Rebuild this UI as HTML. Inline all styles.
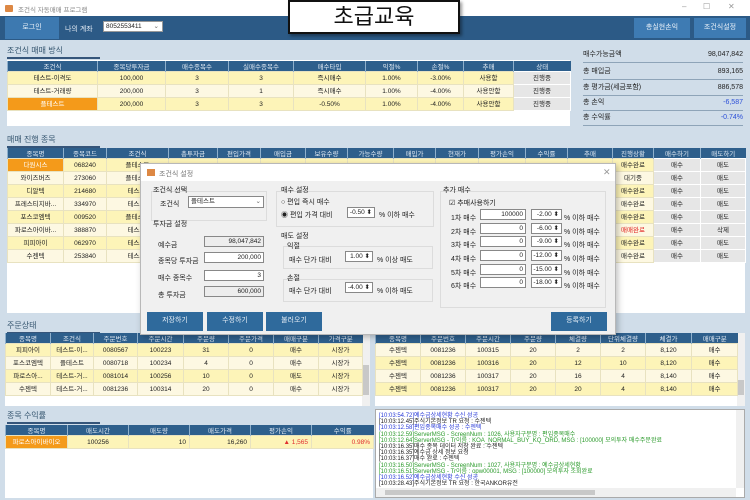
<!DOCTYPE html>
<html><head><meta charset="utf-8">
<style>
*{margin:0;padding:0;box-sizing:border-box}
body{width:750px;height:500px;overflow:hidden;background:#d0dde9;font-family:"Liberation Sans","Noto Sans CJK KR",sans-serif;font-size:7px;color:#222;position:relative}
.a{position:absolute}
table{border-collapse:collapse;table-layout:fixed;position:absolute;background:#fff}
th{background:#2e5f8c;color:#dfe8f2;font-weight:normal;height:9px;font-size:6.5px;border-left:1px solid #8fb0cc;text-align:center}
td{height:13px;line-height:11px;text-align:center;font-size:6.5px;border:1px solid #e8e2c0;white-space:nowrap;overflow:hidden}
tr.y td{background:#fdf4b8}
tr.w td{background:#fdf8e2}
td.o{background:#f49a1a!important;color:#fff}
td.r{text-align:right;padding-right:3px}
td.g{background:#e6e6e6!important;border:1px solid #fff}
.btn{position:absolute;background:#3e7bb3;color:#e8f0f8;text-align:center;font-size:7px}
.sec{position:absolute;font-size:8px;color:#35556f;border-bottom:2px solid #35557a;width:93px;padding-bottom:1px}
.rp{position:absolute;left:583px;width:160px;border-bottom:1px solid #8ea4b8;height:15px;font-size:7px;line-height:14px}
.rp span{float:right}
.dlg{position:absolute;left:140px;top:163px;width:476px;height:172px;background:#f0f0f0;border:1px solid #b8b8b8;box-shadow:2px 2px 6px rgba(0,0,0,.25)}
.dlg .a{font-size:7px;white-space:nowrap}
.in{position:absolute;background:#fff;border:1px solid #888;text-align:right;padding-right:2px;font-size:6.5px;line-height:9px;height:11px;white-space:nowrap;overflow:hidden}
.ro{background:#ededed}
.grp{position:absolute;border:1px solid #dcdcdc}
.dbtn{position:absolute;background:#2f6a9c;color:#e6eef6;font-size:7px;text-align:center;line-height:18px;height:19px}
.log div{height:6.2px;line-height:6.2px;font-size:6px;white-space:nowrap}
.b{color:#2a3bd8}.k{color:#222}.gr{color:#2a9a2a}
</style></head><body>
<div class="a" style="left:0;top:0;width:750px;height:16px;background:#fff"></div>
<div class="a" style="left:5px;top:5px;width:8px;height:7px;background:#d84;border-radius:1px"></div>
<div class="a" style="left:18px;top:4px;color:#888;font-size:6.5px">조건식 자동매매 프로그램</div>
<div class="a" style="left:682px;top:2px;color:#999;font-size:8px">–</div>
<div class="a" style="left:703px;top:2px;color:#999;font-size:8px">☐</div>
<div class="a" style="left:728px;top:2px;color:#999;font-size:8px">✕</div>
<div class="a" style="left:0;top:16px;width:750px;height:24px;background:#2c5a86"></div>
<div class="btn" style="left:5px;top:17px;width:54px;height:22px;line-height:22px;background:#3d79b0">로그인</div>
<div class="a" style="left:65px;top:24px;color:#dfe8f2;font-size:7px">나의 계좌</div>
<div class="a" style="left:103px;top:21px;width:60px;height:11px;background:#fff;border:1px solid #999;font-size:6.5px;line-height:9px;padding-left:2px">8052553411<span style="float:right;margin-right:3px;color:#666">⌄</span></div>
<div class="btn" style="left:634px;top:18px;width:56px;height:20px;line-height:20px">총실현손익</div>
<div class="btn" style="left:694px;top:18px;width:52px;height:20px;line-height:20px">조건식설정</div>
<div class="a" style="left:288px;top:0;width:172px;height:34px;background:#fff;border:2px solid #111;box-shadow:2px 2px 3px rgba(0,0,0,.4);font-size:22px;text-align:center;line-height:30px;color:#111">초급교육</div>

<div class="sec" style="left:7px;top:45px">조건식 매매 방식</div>
<div class="a" style="left:7px;top:60px;width:563px;height:66px;background:#fff"></div>
<table style="left:7px;top:61px;width:563px">
<colgroup><col style="width:90px"><col style="width:68px"><col style="width:63px"><col style="width:65px"><col style="width:72px"><col style="width:52px"><col style="width:46px"><col style="width:50px"><col style="width:57px"></colgroup>
<tr><th>조건식</th><th>종목당투자금</th><th>매수종목수</th><th>실매수종목수</th><th>매수타입</th><th>익절%</th><th>손절%</th><th>추매</th><th>상태</th></tr>
<tr class="y"><td>테스트-이격도</td><td>100,000</td><td>3</td><td>3</td><td>즉시매수</td><td>1.00%</td><td>-3.00%</td><td>사용함</td><td class="g">진행중</td></tr>
<tr class="w"><td>테스트-거래량</td><td>200,000</td><td>3</td><td>1</td><td>즉시매수</td><td>1.00%</td><td>-4.00%</td><td>사용안함</td><td class="g">진행중</td></tr>
<tr class="y"><td class="o">플테스트</td><td>200,000</td><td>3</td><td>3</td><td>-0.50%</td><td>1.00%</td><td>-4.00%</td><td>사용안함</td><td class="g">진행중</td></tr>
</table>
<div class="rp" style="top:48px">매수가능금액<span>98,047,842</span></div>
<div class="rp" style="top:65px">총 매입금<span>893,165</span></div>
<div class="rp" style="top:81px">총 평가금(세금포함)<span>886,578</span></div>
<div class="rp" style="top:96px">총 손익<span style="color:#2b4fd8">-6,587</span></div>
<div class="rp" style="top:111px">총 수익률<span style="color:#2b4fd8">-0.74%</span></div>

<div class="sec" style="left:7px;top:134px">매매 진행 종목</div>
<div class="a" style="left:7px;top:148px;width:738px;height:165px;background:#fff"></div>
<table style="left:7px;top:148px;width:738px">
<colgroup><col style="width:56px"><col style="width:43px"><col style="width:62px"><col style="width:49px"><col style="width:43px"><col style="width:45px"><col style="width:42px"><col style="width:46px"><col style="width:42px"><col style="width:43px"><col style="width:47px"><col style="width:42px"><col style="width:45px"><col style="width:41px"><col style="width:47px"><col style="width:45px"></colgroup>
<tr><th>종목명</th><th>종목코드</th><th>조건식</th><th>총투자금</th><th>편입가격</th><th>매입금</th><th>보유수량</th><th>가능수량</th><th>매입가</th><th>현재가</th><th>평가손익</th><th>수익률</th><th>추매</th><th>진행상황</th><th>매수하기</th><th>매도하기</th></tr>
<tr class="y"><td class="o">다원시스</td><td>068240</td><td>플테스트</td><td></td><td></td><td></td><td></td><td></td><td></td><td></td><td></td><td></td><td></td><td>매수완료</td><td class="g">매수</td><td class="g">매도</td></tr>
<tr class="w"><td>와이즈버즈</td><td>273060</td><td>플테스트</td><td></td><td></td><td></td><td></td><td></td><td></td><td></td><td></td><td></td><td></td><td>대기중</td><td class="g">매수</td><td class="g">매도</td></tr>
<tr class="y"><td>디알텍</td><td>214680</td><td>테스트-</td><td></td><td></td><td></td><td></td><td></td><td></td><td></td><td></td><td></td><td></td><td>매수완료</td><td class="g">매수</td><td class="g">매도</td></tr>
<tr class="w"><td>프레스티지바...</td><td>334970</td><td>테스트-</td><td></td><td></td><td></td><td></td><td></td><td></td><td></td><td></td><td></td><td></td><td>매수완료</td><td class="g">매수</td><td class="g">매도</td></tr>
<tr class="y"><td>포스코엠텍</td><td>009520</td><td>플테스트</td><td></td><td></td><td></td><td></td><td></td><td></td><td></td><td></td><td></td><td></td><td>매수완료</td><td class="g">매수</td><td class="g">매도</td></tr>
<tr class="w"><td>파로스아이바...</td><td>388870</td><td>테스트-</td><td></td><td></td><td></td><td></td><td></td><td></td><td></td><td></td><td></td><td></td><td style="color:#e02020">매매완료</td><td class="g">매수</td><td class="g">삭제</td></tr>
<tr class="y"><td>피피아이</td><td>062970</td><td>테스트-</td><td></td><td></td><td></td><td></td><td></td><td></td><td></td><td></td><td></td><td></td><td>매수완료</td><td class="g">매수</td><td class="g">매도</td></tr>
<tr class="w"><td>수젠텍</td><td>253840</td><td>테스트-</td><td></td><td></td><td></td><td></td><td></td><td></td><td></td><td></td><td></td><td></td><td>매수완료</td><td class="g">매수</td><td class="g">매도</td></tr>
</table>

<div class="sec" style="left:7px;top:320px">주문상태</div>
<div class="a" style="left:5px;top:333px;width:365px;height:73px;background:#fff"></div>
<div class="a" style="left:362px;top:333px;width:8px;height:73px;background:#f0f0f0"></div>
<div class="a" style="left:363px;top:365px;width:6px;height:30px;background:#c8c8c8"></div>
<table style="left:5px;top:333px;width:357px">
<colgroup><col style="width:45px"><col style="width:43px"><col style="width:44px"><col style="width:46px"><col style="width:45px"><col style="width:45px"><col style="width:45px"><col style="width:44px"></colgroup>
<tr><th>종목명</th><th>조건식</th><th>주문번호</th><th>주문시간</th><th>주문량</th><th>주문가격</th><th>매매구분</th><th>가격구분</th></tr>
<tr class="y"><td>피피아이</td><td>테스트-이...</td><td>0080567</td><td>100223</td><td>31</td><td>0</td><td>매수</td><td>시장가</td></tr>
<tr class="w"><td>포스코엠텍</td><td>플테스트</td><td>0080718</td><td>100234</td><td>4</td><td>0</td><td>매수</td><td>시장가</td></tr>
<tr class="y"><td>파로스아...</td><td>테스트-거...</td><td>0081014</td><td>100256</td><td>10</td><td>0</td><td>매도</td><td>시장가</td></tr>
<tr class="w"><td>수젠텍</td><td>테스트-거...</td><td>0081236</td><td>100314</td><td>20</td><td>0</td><td>매수</td><td>시장가</td></tr>
</table>
<div class="a" style="left:375px;top:333px;width:370px;height:73px;background:#fff"></div>
<div class="a" style="left:737px;top:333px;width:8px;height:73px;background:#f0f0f0"></div>
<div class="a" style="left:738px;top:380px;width:6px;height:15px;background:#c8c8c8"></div>
<table style="left:375px;top:333px;width:362px">
<colgroup><col style="width:45px"><col style="width:45px"><col style="width:45px"><col style="width:45px"><col style="width:45px"><col style="width:45px"><col style="width:46px"><col style="width:46px"></colgroup>
<tr><th>종목명</th><th>주문번호</th><th>주문시간</th><th>주문량</th><th>체결량</th><th>단위체결량</th><th>체결가</th><th>매매구분</th></tr>
<tr class="w"><td>수젠텍</td><td>0081236</td><td>100315</td><td>20</td><td>2</td><td>2</td><td>8,120</td><td>매수</td></tr>
<tr class="y"><td>수젠텍</td><td>0081236</td><td>100316</td><td>20</td><td>12</td><td>10</td><td>8,120</td><td>매수</td></tr>
<tr class="w"><td>수젠텍</td><td>0081236</td><td>100317</td><td>20</td><td>16</td><td>4</td><td>8,140</td><td>매수</td></tr>
<tr class="y"><td>수젠텍</td><td>0081236</td><td>100317</td><td>20</td><td>20</td><td>4</td><td>8,140</td><td>매수</td></tr>
</table>

<div class="sec" style="left:7px;top:410px">종목 수익률</div>
<div class="a" style="left:5px;top:425px;width:368px;height:73px;background:#fff"></div>
<table style="left:5px;top:425px;width:368px">
<colgroup><col style="width:62px"><col style="width:61px"><col style="width:61px"><col style="width:61px"><col style="width:61px"><col style="width:62px"></colgroup>
<tr><th>종목명</th><th>매도시간</th><th>매도량</th><th>매도가격</th><th>평가손익</th><th>수익률</th></tr>
<tr class="y"><td class="o">파로스아이바이오</td><td>100256</td><td class="r">10</td><td class="r">16,260</td><td class="r" style="color:#e03030">▲ 1,565</td><td class="r" style="color:#e03030">0.98%</td></tr>
</table>
<div class="a log" style="left:375px;top:409px;width:370px;height:89px;background:#fff;border:1px solid #aaa;padding:3px 0 0 3px;overflow:hidden">
<div class="b">[10:03:54.72]예수금상세현황 수신 성공</div>
<div class="k">[10:03:12.45]주식기본정보 TR 요청 : 수젠텍</div>
<div class="b">[10:03:12.58]편입종목매수 성공 : 수젠텍</div>
<div class="gr">[10:03:12.59]ServerMSG - ScreenNum : 1026, 사용자구분명 : 편입종목매수</div>
<div class="gr">[10:03:12.64]ServerMSG - Tr이름 : KOA_NORMAL_BUY_KQ_ORD, MSG : [100000] 모의투자 매수주문완료</div>
<div class="k">[10:03:16.35]매수 종목 데이터 저장 완료 : 수젠텍</div>
<div class="k">[10:03:16.35]예수금 상세 정보 요청</div>
<div class="k">[10:03:16.37]매수 완료 : 수젠텍</div>
<div class="gr">[10:03:16.50]ServerMSG - ScreenNum : 1027, 사용자구분명 : 예수금상세현황</div>
<div class="gr">[10:03:16.51]ServerMSG - Tr이름 : opw00001, MSG : [100000] 모의투자 조회완료</div>
<div class="b">[10:03:16.52]예수금상세현황 수신 성공</div>
<div class="k">[10:03:28.43]주식기본정보 TR 요청 : 한국ANKOR유전</div>
</div>
<div class="a" style="left:376px;top:488px;width:360px;height:9px;background:#f0f0f0"></div>
<div class="a" style="left:385px;top:490px;width:210px;height:5px;background:#c8c8c8"></div>
<div class="a" style="left:736px;top:410px;width:8px;height:78px;background:#f0f0f0"></div>

<div class="dlg">
 <div class="a" style="left:0;top:0;width:474px;height:17px;background:#fff"></div>
 <div class="a" style="left:6px;top:5px;width:8px;height:7px;background:#d84"></div>
 <div class="a" style="left:18px;top:5px;color:#777">조건식 설정</div>
 <div class="a" style="left:462px;top:3px;color:#999;font-size:9px">✕</div>

 <div class="grp" style="left:10px;top:27px;width:116px;height:30px"></div>
 <div class="a" style="left:12px;top:21px">조건식 선택</div>
 <div class="a" style="left:19px;top:35px">조건식</div>
 <div class="in" style="left:47px;top:32px;width:76px;text-align:left;padding-left:2px;height:12px">플테스트<span style="float:right;color:#666">⌄</span></div>

 <div class="a" style="left:12px;top:55px">투자금 설정</div>
 <div class="a" style="left:17px;top:76px">예수금</div>
 <div class="in ro" style="left:63px;top:72px;width:60px">98,047,842</div>
 <div class="a" style="left:17px;top:92px">종목당 투자금</div>
 <div class="in" style="left:63px;top:88px;width:60px">200,000</div>
 <div class="a" style="left:17px;top:109px">매수 종목수</div>
 <div class="in" style="left:63px;top:106px;width:60px">3</div>
 <div class="a" style="left:17px;top:126px">총 투자금</div>
 <div class="in ro" style="left:63px;top:122px;width:60px">600,000</div>

 <div class="grp" style="left:135px;top:27px;width:158px;height:36px"></div>
 <div class="a" style="left:140px;top:21px">매수 설정</div>
 <div class="a" style="left:140px;top:33px">○ 편입 즉시 매수</div>
 <div class="a" style="left:140px;top:46px">◉ 편입 가격 대비</div>
 <div class="in" style="left:206px;top:43px;width:28px">-0.50 ⬍</div>
 <div class="a" style="left:238px;top:46px">% 이하 매수</div>
 <div class="a" style="left:140px;top:67px">매도 설정</div>
 <div class="grp" style="left:142px;top:82px;width:150px;height:23px"></div>
 <div class="a" style="left:146px;top:77px">익절</div>
 <div class="a" style="left:148px;top:91px">매수 단가 대비</div>
 <div class="in" style="left:204px;top:87px;width:28px">1.00 ⬍</div>
 <div class="a" style="left:236px;top:91px">% 이상 매도</div>
 <div class="grp" style="left:142px;top:115px;width:150px;height:23px"></div>
 <div class="a" style="left:146px;top:109px">손절</div>
 <div class="a" style="left:148px;top:122px">매수 단가 대비</div>
 <div class="in" style="left:204px;top:118px;width:28px">-4.00 ⬍</div>
 <div class="a" style="left:236px;top:122px">% 이하 매도</div>

 <div class="grp" style="left:299px;top:27px;width:166px;height:117px"></div>
 <div class="a" style="left:302px;top:21px">추가 매수</div>
 <div class="a" style="left:308px;top:34px">☑ 추매사용하기</div>
 <div class="a" style="left:310px;top:49px">1차 매수</div><div class="in" style="left:339px;top:45px;width:46px">100000</div><div class="in" style="left:390px;top:45px;width:31px">-2.00 ⬍</div><div class="a" style="left:423px;top:49px">% 이하 매수</div>
 <div class="a" style="left:310px;top:63px">2차 매수</div><div class="in" style="left:339px;top:59px;width:46px">0</div><div class="in" style="left:390px;top:59px;width:31px">-6.00 ⬍</div><div class="a" style="left:423px;top:63px">% 이하 매수</div>
 <div class="a" style="left:310px;top:76px">3차 매수</div><div class="in" style="left:339px;top:72px;width:46px">0</div><div class="in" style="left:390px;top:72px;width:31px">-9.00 ⬍</div><div class="a" style="left:423px;top:76px">% 이하 매수</div>
 <div class="a" style="left:310px;top:90px">4차 매수</div><div class="in" style="left:339px;top:86px;width:46px">0</div><div class="in" style="left:390px;top:86px;width:31px">-12.00 ⬍</div><div class="a" style="left:423px;top:90px">% 이하 매수</div>
 <div class="a" style="left:310px;top:104px">5차 매수</div><div class="in" style="left:339px;top:100px;width:46px">0</div><div class="in" style="left:390px;top:100px;width:31px">-15.00 ⬍</div><div class="a" style="left:423px;top:104px">% 이하 매수</div>
 <div class="a" style="left:310px;top:117px">6차 매수</div><div class="in" style="left:339px;top:113px;width:46px">0</div><div class="in" style="left:390px;top:113px;width:31px">-18.00 ⬍</div><div class="a" style="left:423px;top:117px">% 이하 매수</div>

 <div class="dbtn" style="left:6px;top:148px;width:56px">저장하기</div>
 <div class="dbtn" style="left:66px;top:148px;width:56px">수정하기</div>
 <div class="dbtn" style="left:125px;top:148px;width:56px">불러오기</div>
 <div class="dbtn" style="left:410px;top:148px;width:56px">등록하기</div>
</div>
</body></html>
